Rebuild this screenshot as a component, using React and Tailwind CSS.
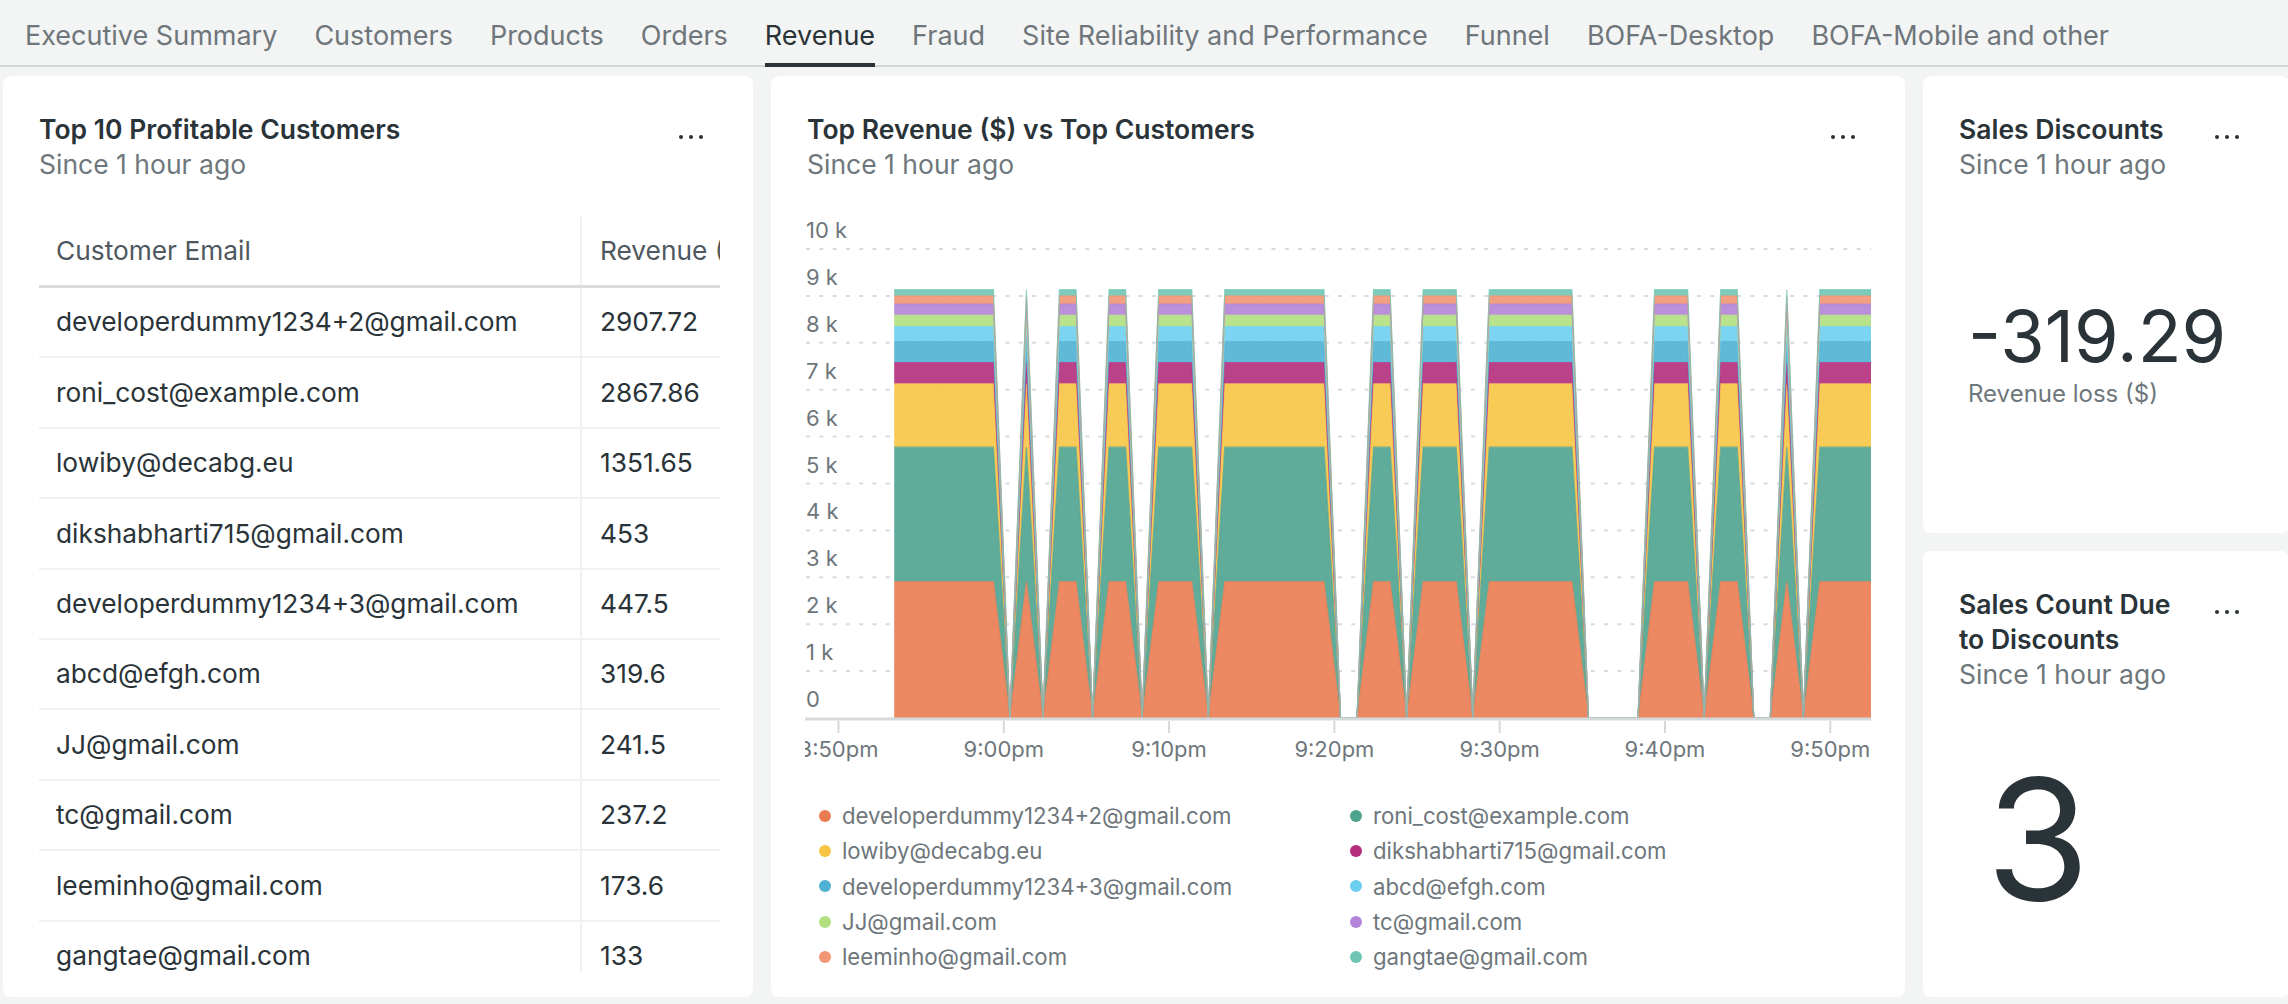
import React from 'react';

const TABS = [
  'Executive Summary',
  'Customers',
  'Products',
  'Orders',
  'Revenue',
  'Fraud',
  'Site Reliability and Performance',
  'Funnel',
  'BOFA-Desktop',
  'BOFA-Mobile and other',
];

const CUSTOMERS = [
  { email: 'developerdummy1234+2@gmail.com', revenue: '2907.72', color: '#ea7b51', dot: 'bg-[#ea7b51]' },
  { email: 'roni_cost@example.com', revenue: '2867.86', color: '#4ea38f', dot: 'bg-[#4ea38f]' },
  { email: 'lowiby@decabg.eu', revenue: '1351.65', color: '#f7c444', dot: 'bg-[#f7c444]' },
  { email: 'dikshabharti715@gmail.com', revenue: '453', color: '#b42d7c', dot: 'bg-[#b42d7c]' },
  { email: 'developerdummy1234+3@gmail.com', revenue: '447.5', color: '#4eb1d3', dot: 'bg-[#4eb1d3]' },
  { email: 'abcd@efgh.com', revenue: '319.6', color: '#6dcff0', dot: 'bg-[#6dcff0]' },
  { email: 'JJ@gmail.com', revenue: '241.5', color: '#b1df7f', dot: 'bg-[#b1df7f]' },
  { email: 'tc@gmail.com', revenue: '237.2', color: '#b384d7', dot: 'bg-[#b384d7]' },
  { email: 'leeminho@gmail.com', revenue: '173.6', color: '#f29573', dot: 'bg-[#f29573]' },
  { email: 'gangtae@gmail.com', revenue: '133', color: '#6fc5b2', dot: 'bg-[#6fc5b2]' },
];

// one sample a minute: F = every customer present, Z = nothing
const SAMPLES = [
  'FFFFFFF', 'Z', 'F', 'Z', 'FF', 'Z', 'FF', 'Z', 'FFF', 'Z', 'FFFFFFF', 'ZZ', 'FF', 'Z',
  'FFF', 'Z', 'FFFFFF', 'ZZZZ', 'FFF', 'Z', 'FF', 'ZZ', 'F', 'Z', 'FFFFF',
].join('');

const X_LABELS = ['8:50pm', '9:00pm', '9:10pm', '9:20pm', '9:30pm', '9:40pm', '9:50pm'];

function Dots() {
  return (
    <div className="h-[35px] flex items-end gap-[6px] pb-[8px] mr-[14px] shrink-0">
      <span className="w-[4px] h-[4px] rounded-full bg-[#293338]" />
      <span className="w-[4px] h-[4px] rounded-full bg-[#293338]" />
      <span className="w-[4px] h-[4px] rounded-full bg-[#293338]" />
    </div>
  );
}

function PanelHeader({ title }) {
  return (
    <div className="flex items-start gap-[24px]">
      <div className="flex-1 min-w-0">
        <h2 className="text-[26.5px] leading-[35px] font-semibold text-[#293338]">{title}</h2>
        <p className="text-[26.5px] leading-[35px] text-[#6e777c]">Since 1 hour ago</p>
      </div>
      <Dots />
    </div>
  );
}

function RevenueChart() {
  const W = 1066;
  const H = 555;
  const zeroY = 503;
  const perK = 46.9;
  const yOf = (v) => zeroY - (v * perK) / 1000;
  const on = SAMPLES.split('').map((c) => (c === 'F' ? 1 : 0));
  const xs = on.map((_, k) => 89.2 + k * 16.53);

  let cum = 0;
  const layers = CUSTOMERS.map((c) => {
    const lo = cum;
    cum += parseFloat(c.revenue);
    return { ...c, lo, hi: cum };
  });

  return (
    <svg width={W} height={H} className="block ml-[-2px]" fontFamily="Inter, sans-serif">
      {Array.from({ length: 10 }, (_, i) => (
        <line
          key={i}
          x1="1"
          x2={W}
          y1={yOf((i + 1) * 1000)}
          y2={yOf((i + 1) * 1000)}
          stroke="#d8dbdd"
          strokeWidth="2"
          strokeDasharray="4 9.3"
        />
      ))}

      {layers.map((l) => {
        const top = xs.map((x, k) => `${x},${yOf(l.hi * on[k])}`);
        const bottom = xs.map((x, k) => `${x},${yOf(l.lo * on[k])}`).reverse();
        return (
          <polygon
            key={l.email}
            points={top.concat(bottom).join(' ')}
            fill={l.color}
            fillOpacity="0.9"
          />
        );
      })}
      {layers.map((l) => (
        <polyline
          key={l.email}
          points={xs.map((x, k) => `${x},${yOf(l.hi * on[k])}`).join(' ')}
          fill="none"
          stroke={l.color}
          strokeWidth="1.2"
          strokeOpacity="0.7"
        />
      ))}

      <line x1="0" x2={W} y1={zeroY + 1} y2={zeroY + 1} stroke="#d6d9db" strokeWidth="3" />
      {X_LABELS.map((t, n) => {
        const x = 33.5 + n * 165.3;
        return (
          <g key={t}>
            <line x1={x} x2={x} y1={zeroY + 3} y2={zeroY + 15} stroke="#d6d9db" strokeWidth="2" />
            <text x={x} y="542" textAnchor="middle" fontSize="22" fill="#6e767b">
              {t}
            </text>
          </g>
        );
      })}
      {Array.from({ length: 11 }, (_, i) => (
        <text key={i} x="1" y={yOf(i * 1000) - 11} fontSize="22" fill="#6e767b">
          {i === 0 ? '0' : `${i} k`}
        </text>
      ))}
    </svg>
  );
}

export default function App() {
  return (
    <div className="w-[2288px] h-[1004px] overflow-hidden bg-[#f3f4f4] font-['Inter',sans-serif]">
      <nav className="h-[67px] flex gap-[37px] pl-[25px] border-b-2 border-[#d3d7d9]">
        {TABS.map((t) => (
          <div
            key={t}
            className={
              t === 'Revenue'
                ? 'h-[67px] flex items-center pt-[10px] border-b-4 border-[#293338] text-[27px] text-[#293338] whitespace-nowrap'
                : 'h-[67px] flex items-center pt-[10px] border-b-4 border-transparent text-[27px] text-[#6e767b] whitespace-nowrap'
            }
          >
            {t}
          </div>
        ))}
      </nav>

      <div className="grid grid-cols-[repeat(12,174px)] grid-rows-[457px_446px] gap-[18px] pt-[9px] pl-[3px]">
        {/* table */}
        <section className="col-span-4 row-span-2 bg-white rounded-[8px] pt-[36px] px-[36px] pb-[25px] flex flex-col">
          <PanelHeader title="Top 10 Profitable Customers" />
          <div className="mt-[35px] mr-[-3px] flex-1 overflow-hidden text-[26.3px]">
            <div className="w-[900px]">
              <div className="flex h-[71px] border-b-[3px] border-[#dadddf] text-[#4f585e]">
                <div className="w-[543px] pl-[17px] flex items-center border-r-2 border-[#eef0f1]">Customer Email</div>
                <div className="pl-[18px] flex items-center">Revenue ($)</div>
              </div>
              {CUSTOMERS.map((c) => (
                <div key={c.email} className="flex h-[70.4px] border-b-2 border-[#f0f1f2] text-[#293338]">
                  <div className="w-[543px] pl-[17px] flex items-center border-r-2 border-[#eef0f1]">{c.email}</div>
                  <div className="pl-[18px] flex items-center">{c.revenue}</div>
                </div>
              ))}
            </div>
          </div>
        </section>

        {/* stacked area chart */}
        <section className="col-span-6 row-span-2 bg-white rounded-[8px] pt-[36px] px-[36px]">
          <PanelHeader title="Top Revenue ($) vs Top Customers" />
          <div className="mt-[33px]">
            <RevenueChart />
          </div>
          <div className="mt-[28px] pl-[12px] grid grid-cols-[531px_1fr]">
            {CUSTOMERS.map((c) => (
              <div key={c.email} className="h-[35.3px] flex items-center gap-[11px] text-[22.2px] text-[#6e767b]">
                <span className={`w-[12px] h-[12px] rounded-full ${c.dot}`} />
                {c.email}
              </div>
            ))}
          </div>
        </section>

        {/* billboards */}
        <section className="col-span-2 bg-white rounded-[8px] pt-[36px] px-[36px]">
          <PanelHeader title="Sales Discounts" />
          <div className="mt-[118px] ml-[9px]">
            <div className="text-[72px] leading-none text-[#293338]">-319.29</div>
            <div className="mt-[8px] text-2xl leading-[28px] text-[#6e777c]">Revenue loss ($)</div>
          </div>
        </section>

        <section className="col-span-2 bg-white rounded-[8px] pt-[36px] px-[36px]">
          <PanelHeader title="Sales Count Due to Discounts" />
          <div className="mt-[63px] ml-[27px] text-[168px] leading-none text-[#293338]">3</div>
        </section>
      </div>
    </div>
  );
}
